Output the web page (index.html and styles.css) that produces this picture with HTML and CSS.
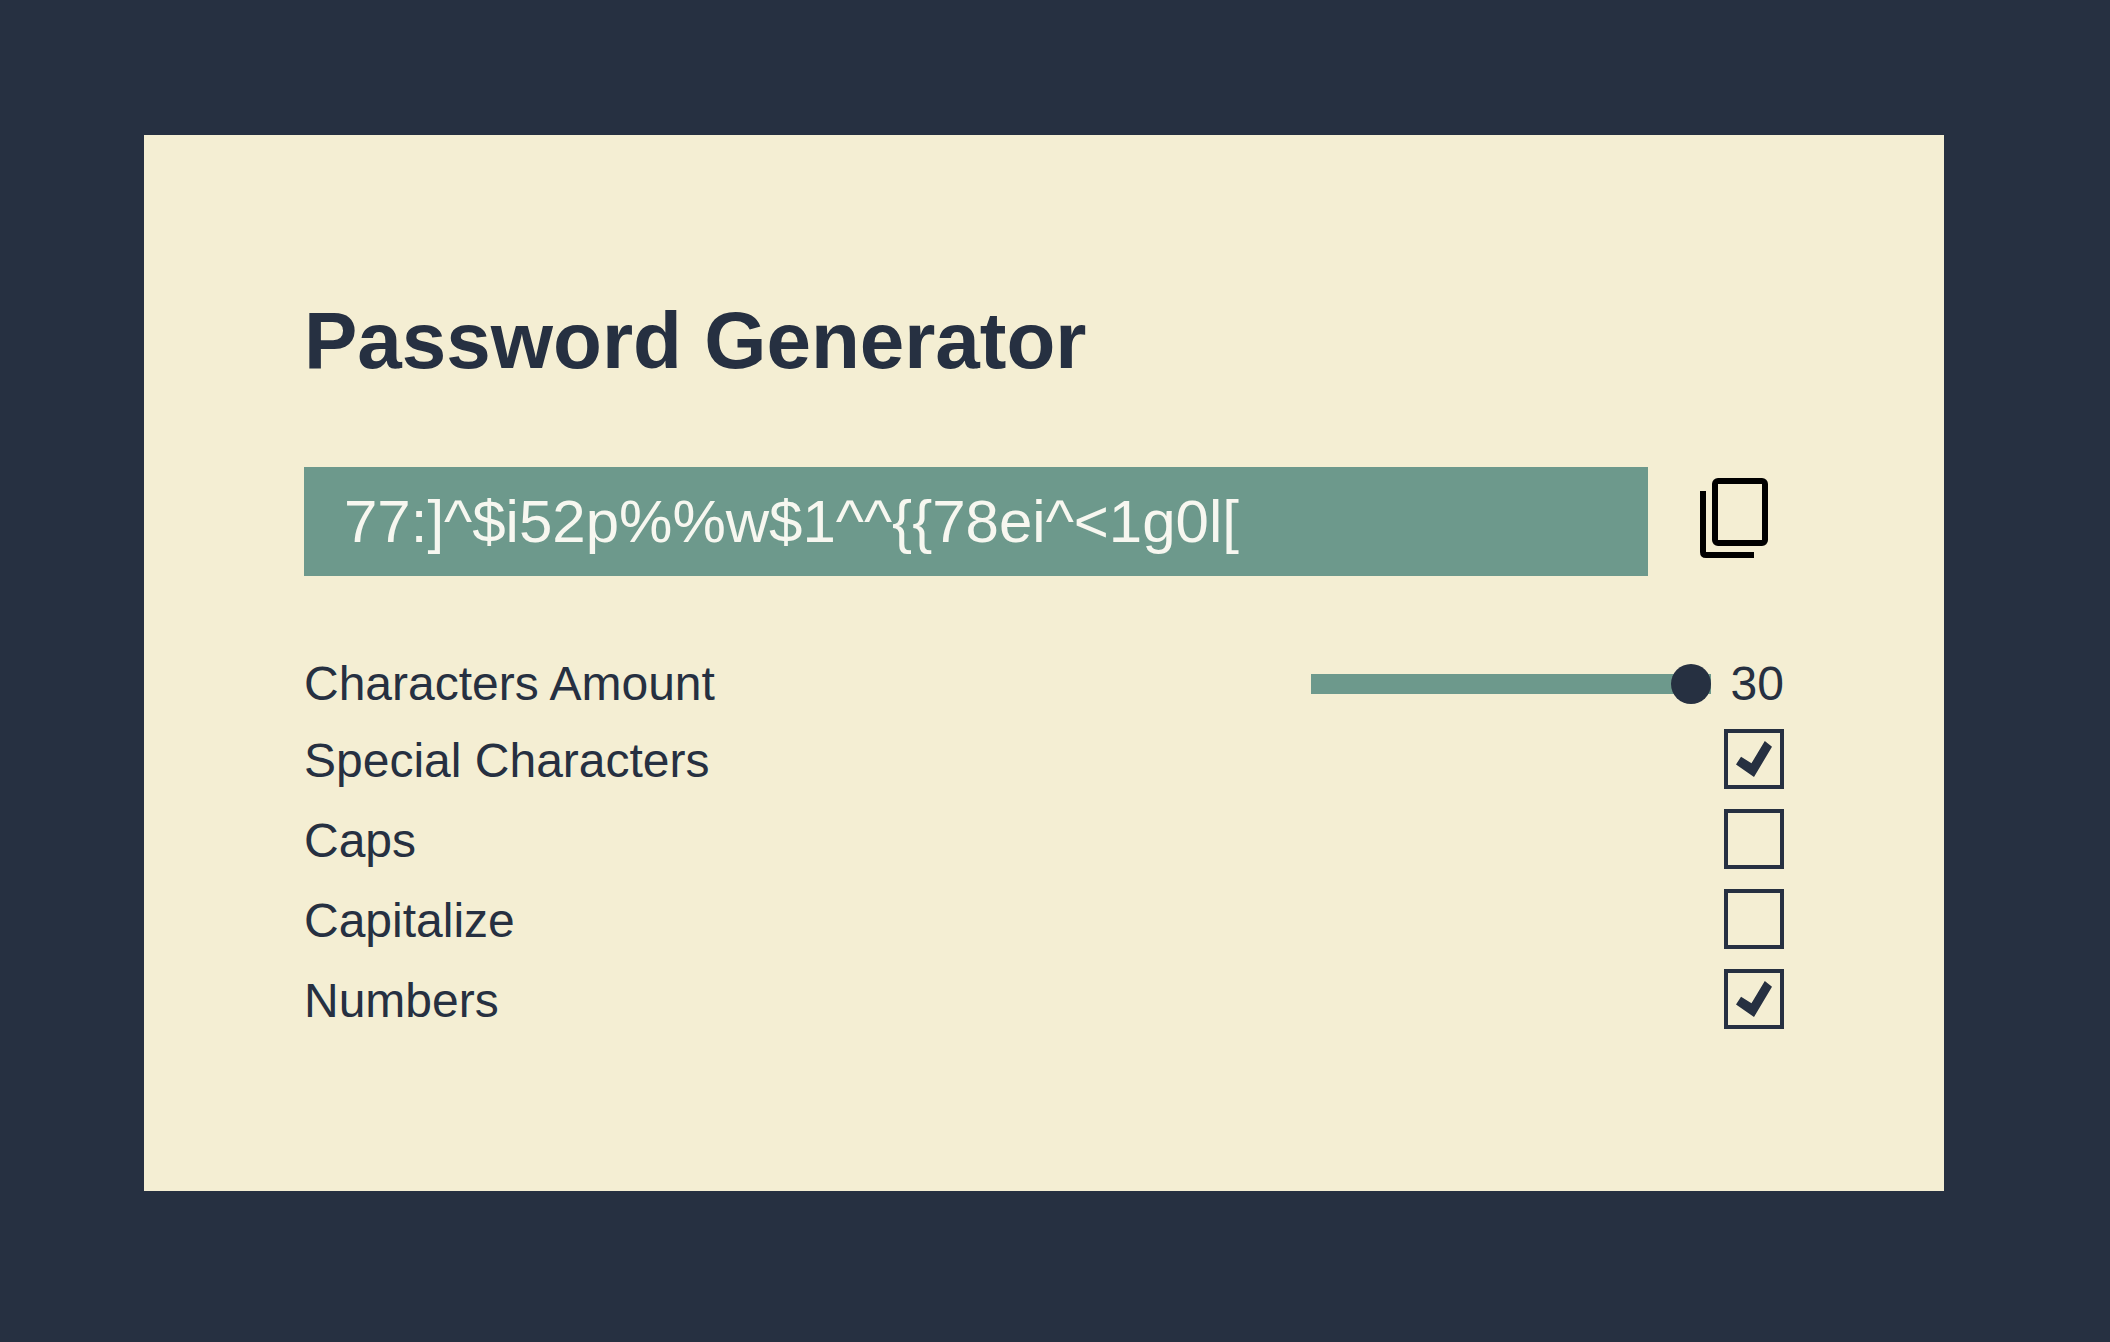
FILE: index.html
```html
<!DOCTYPE html>
<html lang="en">
<head>
  <meta charset="utf-8">
  <meta name="viewport" content="width=device-width, initial-scale=1">
  <title>Password Generator</title>
  <link rel="stylesheet" href="styles.css">
</head>
<body>
  <main class="card">
    <h1 class="title">Password Generator</h1>

    <div class="result">
      <input class="password" type="text" readonly aria-label="Generated password" value="77:]^$i52p%%w$1^^{{78ei^&lt;1g0l[">
      <button class="copy" type="button" aria-label="Copy password">
        <svg class="copy-icon" viewBox="0 0 68 80" fill="none" stroke="currentColor" stroke-width="6" aria-hidden="true">
          <rect x="15" y="3" width="50" height="62" rx="3"/>
          <path d="M3 13v61q0 3 3 3h48"/>
        </svg>
      </button>
    </div>

    <form class="options">
      <div class="amount">
        <label for="amount">Characters Amount</label>
        <div class="amount-control">
          <input class="slider" id="amount" type="range" min="1" max="30" value="30">
          <output for="amount">30</output>
        </div>
      </div>
      <div class="option">
        <label class="option-label" for="special">Special Characters</label>
        <input class="check" id="special" type="checkbox" checked>
      </div>
      <div class="option">
        <label class="option-label" for="caps">Caps</label>
        <input class="check" id="caps" type="checkbox">
      </div>
      <div class="option">
        <label class="option-label" for="capitalize">Capitalize</label>
        <input class="check" id="capitalize" type="checkbox">
      </div>
      <div class="option">
        <label class="option-label" for="numbers">Numbers</label>
        <input class="check" id="numbers" type="checkbox" checked>
      </div>
    </form>
  </main>
</body>
</html>
```
FILE: styles.css
```css
:root {
  --navy: #263041;
  --cream: #f4eed3;
  --teal: #6d998c;
  --white: #f7f7f0;
}

* {
  box-sizing: border-box;
}

body {
  margin: 0;
  padding: 135px 166px 135px 144px;
  background: var(--navy);
  color: var(--navy);
  font-family: "Liberation Sans", Arial, Helvetica, sans-serif;
  font-size: 48px;
  line-height: 56px;
}

.card {
  padding: 160px 160px 162px;
  background: var(--cream);
}

.title {
  margin: 0 0 80px;
  font-size: 80px;
  line-height: 92px;
}

.result {
  display: flex;
  align-items: center;
  gap: 36px;
  margin-bottom: 80px;
}

.password {
  flex: 1;
  min-width: 0;
  height: 109px;
  padding: 20px 40px;
  border: 0;
  border-radius: 0;
  outline: 0;
  background: var(--teal);
  color: var(--white);
  font: inherit;
  font-size: 60px;
}

.copy {
  display: flex;
  align-items: center;
  justify-content: center;
  width: 100px;
  height: 100px;
  padding: 0 0 8px;
  border: 0;
  background: transparent;
  color: #000;
  cursor: pointer;
}

.copy-icon {
  width: 68px;
  height: 80px;
}

.options {
  display: flex;
  flex-direction: column;
  gap: 20px;
}

.amount,
.option {
  display: flex;
  align-items: center;
  justify-content: space-between;
}

/* The text line is shorter than a tick box, so it sits closer to the next row. */
.amount {
  margin-bottom: -3px;
}

.amount-control {
  display: flex;
  align-items: center;
  gap: 20px;
}

.option-label {
  padding-top: 4px;
}

.slider {
  appearance: none;
  width: 400px;
  height: 40px;
  margin: 0;
  background: transparent;
  cursor: pointer;
}

.slider::-webkit-slider-runnable-track {
  height: 20px;
  background: var(--teal);
}

.slider::-webkit-slider-thumb {
  appearance: none;
  width: 40px;
  height: 40px;
  margin-top: -10px;
  border-radius: 50%;
  background: var(--navy);
}

.check {
  appearance: none;
  display: grid;
  place-content: center;
  width: 60px;
  height: 60px;
  margin: 0;
  border: 4px solid var(--navy);
  cursor: pointer;
}

.check:checked::before {
  content: "";
  width: 36px;
  height: 36px;
  background: var(--navy);
  clip-path: polygon(14% 44%, 0 65%, 50% 100%, 100% 16%, 80% 0%, 43% 62%);
}
```
